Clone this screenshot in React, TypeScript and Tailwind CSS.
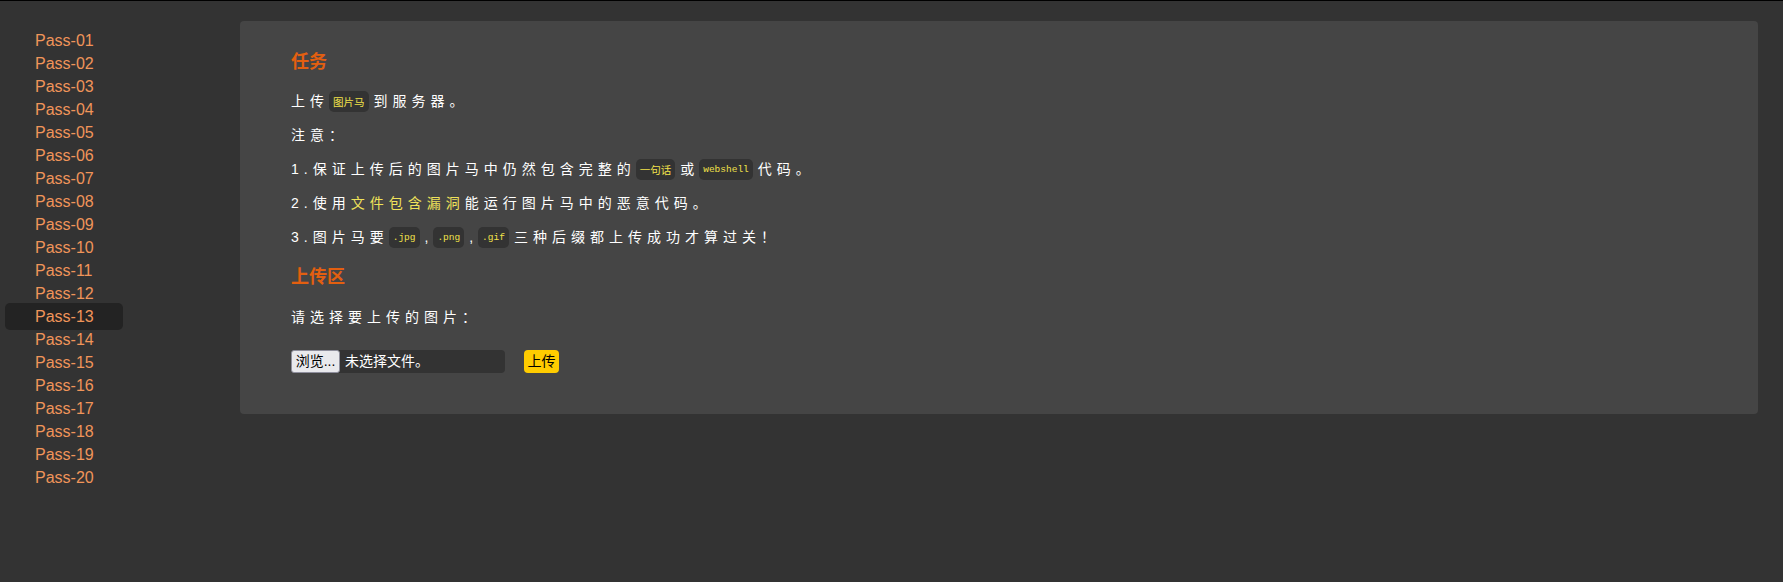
import React from 'react';

const passes = Array.from({ length: 20 }, (_, i) => `Pass-${String(i + 1).padStart(2, '0')}`);
const current = 'Pass-13';

function Code({ children, mono = false }: { children: React.ReactNode; mono?: boolean }) {
  const font = mono
    ? 'font-["Liberation_Mono",monospace] text-[9.5px]'
    : 'font-["Noto_Sans_CJK_SC",sans-serif] text-[10.5px]';
  return (
    <span
      className={`inline-block h-[21px] rounded-[5px] bg-[#333333] px-[4px] mr-[5px] align-middle leading-[21px] tracking-normal text-[#f1e14a] ${font}`}
    >
      {children}
    </span>
  );
}

function Line({ children, className = '' }: { children: React.ReactNode; className?: string }) {
  return (
    <div className={`flex h-[24px] items-center whitespace-pre text-[14px] tracking-[5px] text-white ${className}`}>
      {children}
    </div>
  );
}

export default function App() {
  return (
    <div className='flex min-h-screen border-t border-black bg-[#333333] font-["Liberation_Sans","Noto_Sans_CJK_SC",sans-serif]'>
      <aside className="w-[240px] flex-none pl-[5px] pt-[28px]">
        <ul>
          {passes.map((p) =>
            p === current ? (
              <li
                key={p}
                className="-my-[2px] w-[118px] rounded-[5px] bg-[#232323] pl-[30px] text-[16px] leading-[27px] text-[#f0955a]"
              >
                {p}
              </li>
            ) : (
              <li key={p} className="w-[118px] pl-[30px] text-[16px] leading-[23px] text-[#f0955a]">
                {p}
              </li>
            )
          )}
        </ul>
      </aside>

      <main className="mr-[25px] mt-[20px] flex-1 self-start">
        <div className="rounded-[4px] bg-[#454545] pb-[41px] pl-[51px] pt-[29px]">
          <div className="flex h-[24px] items-center text-[18px] font-bold text-[#e35f10]">任务</div>

          <Line className="mt-[15px]">
            上传<Code>图片马</Code>到服务器。
          </Line>
          <Line className="mt-[10px]">注意：</Line>
          <Line className="mt-[10px]">
            1.保证上传后的图片马中仍然包含完整的<Code>一句话</Code>或<Code mono>webshell</Code>代码。
          </Line>
          <Line className="mt-[10px]">
            2.使用<span className="text-[#efe25a]">文件包含漏洞</span>能运行图片马中的恶意代码。
          </Line>
          <Line className="mt-[10px]">
            3.图片马要<Code mono>.jpg</Code>
            <span>,</span>
            <Code mono>.png</Code>
            <span>,</span>
            <Code mono>.gif</Code>三种后缀都上传成功才算过关！
          </Line>

          <div className="mt-[16px] flex h-[24px] items-center text-[18px] font-bold text-[#e35f10]">上传区</div>

          <Line className="mt-[16px]">请选择要上传的图片：</Line>

          <form className="mt-[21px] flex items-center" onSubmit={(e) => e.preventDefault()}>
            <div className="flex h-[23px] w-[214px] items-center rounded-[4px] bg-[#333333]">
              <span className="flex h-[23px] w-[49px] items-center justify-center rounded-[3px] border border-[#8f8f9d] bg-[#e9e9ed] text-[14px] text-black">
                浏览...
              </span>
              <span className="ml-[5px] text-[14px] text-white">未选择文件。</span>
            </div>
            <button
              type="submit"
              className="ml-[19px] flex h-[23px] w-[35px] items-center justify-center rounded-[4px] bg-[#ffcc00] text-[14px] text-black"
            >
              上传
            </button>
          </form>
        </div>
      </main>
    </div>
  );
}
